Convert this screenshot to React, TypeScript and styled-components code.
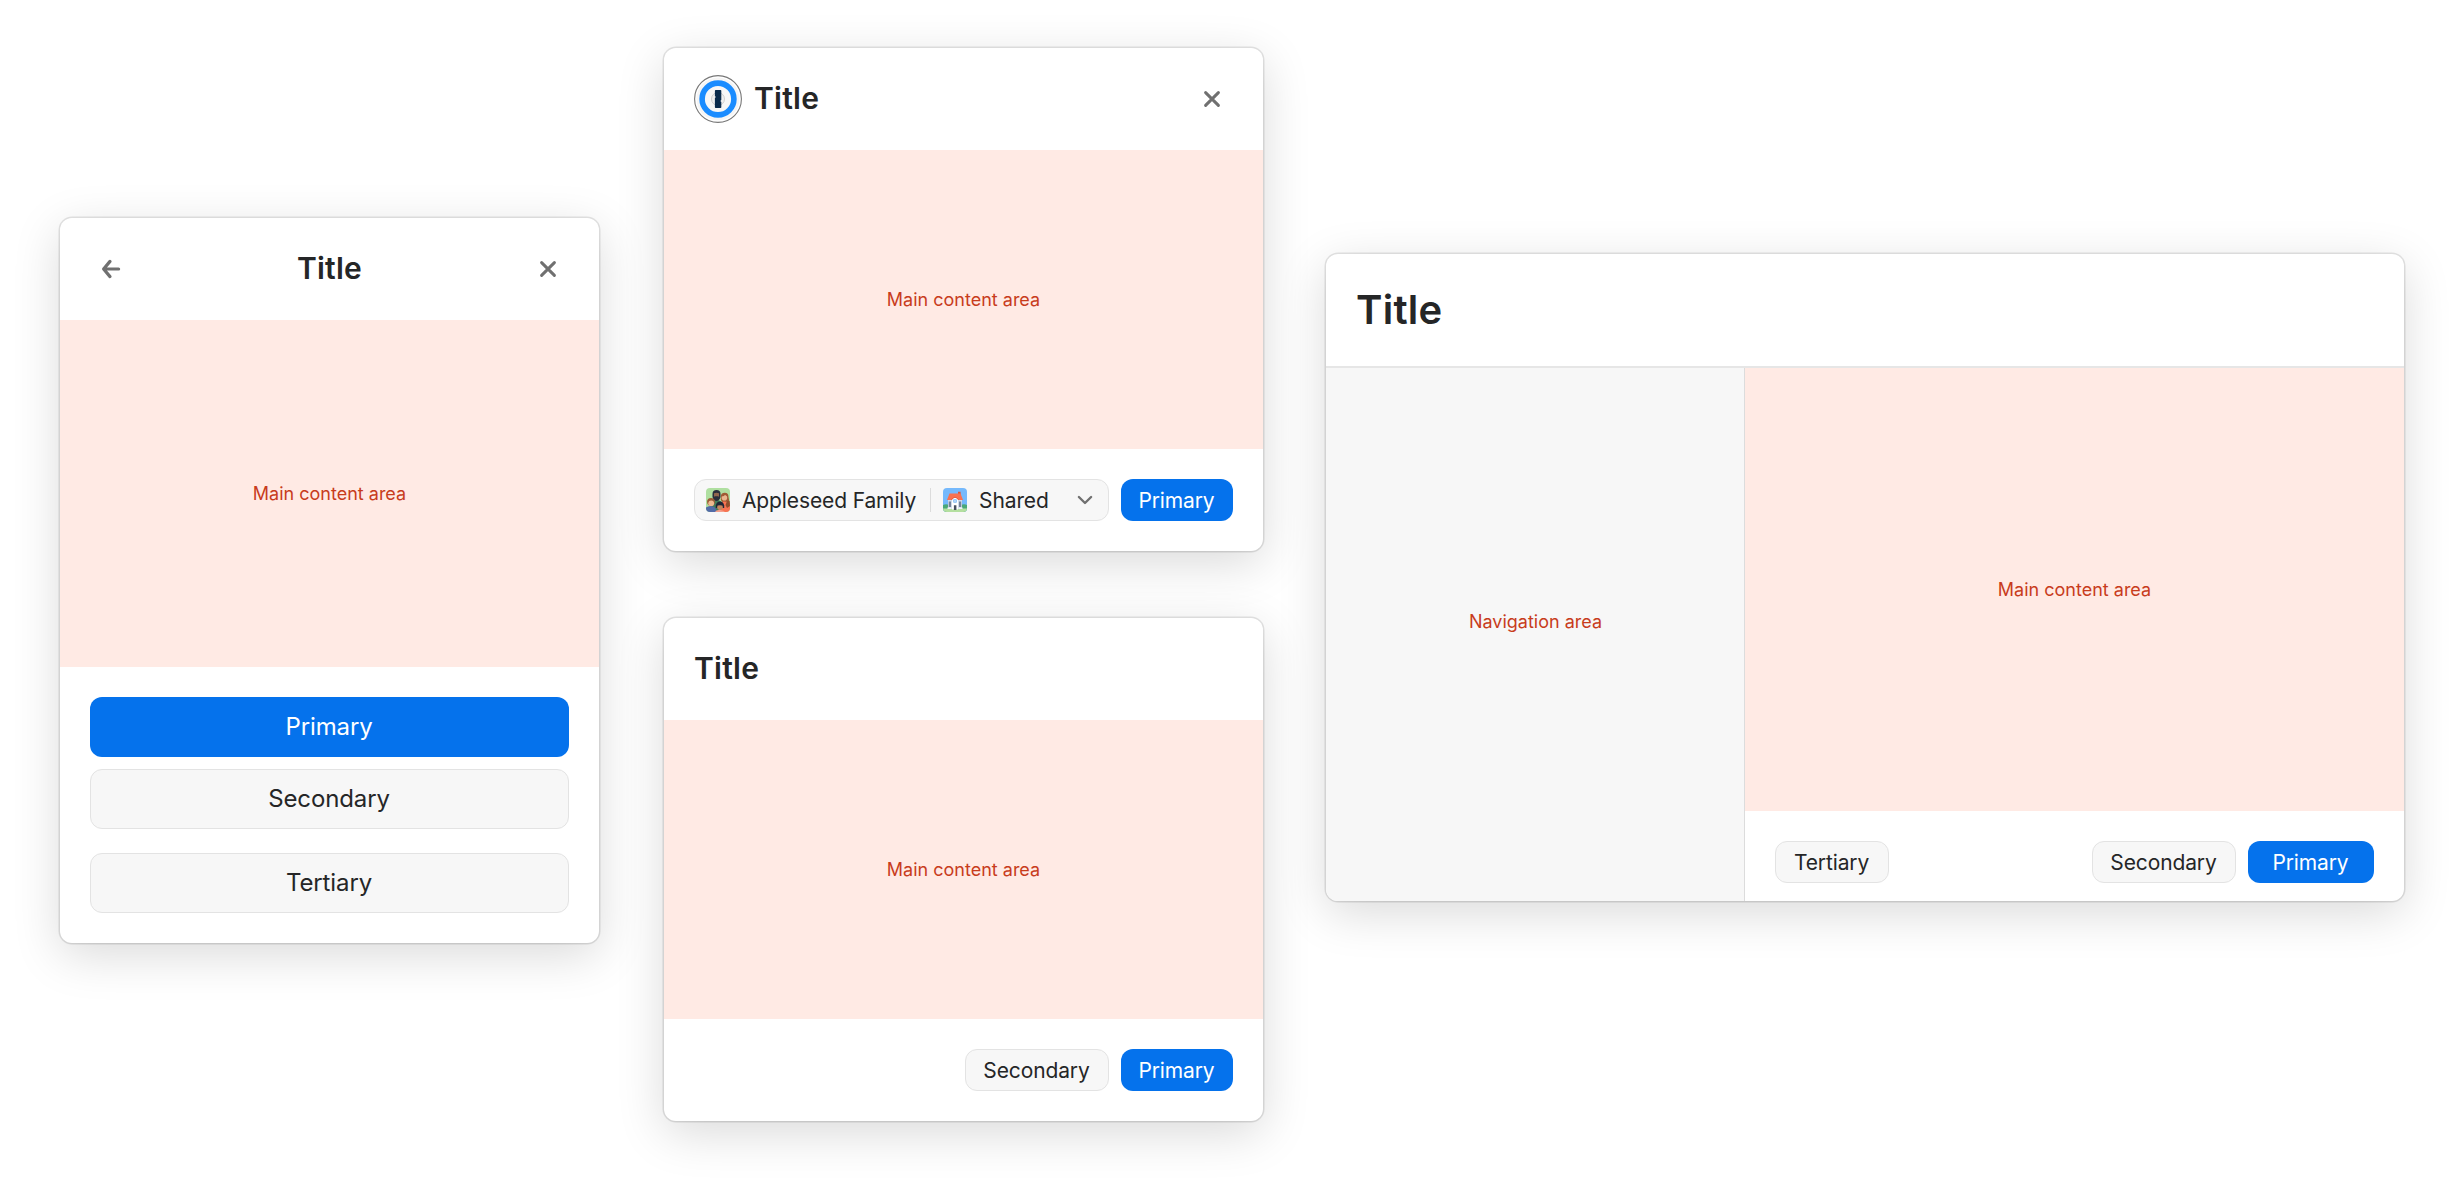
import { FC } from "react";
import styled, { createGlobalStyle } from "styled-components";

const GlobalStyle = createGlobalStyle`
  * {
    box-sizing: border-box;
  }
  body {
    margin: 0;
    background: #fff;
    color: #252627;
    font-family: Inter, "Liberation Sans", sans-serif;
  }
`;

const Page = styled.main`
  display: flex;
  align-items: flex-start;
  width: 2464px;
  height: 1193px;
  padding: 48px 60px 0;
  overflow: hidden;
`;

const Column = styled.div<{ $top?: number; $left?: number }>`
  display: flex;
  flex-direction: column;
  gap: 67px;
  margin-top: ${({ $top }) => $top || 0}px;
  margin-left: ${({ $left }) => $left || 0}px;
`;

const Card = styled.section<{ $width: number; $height: number }>`
  display: flex;
  flex-direction: column;
  width: ${({ $width }) => $width}px;
  height: ${({ $height }) => $height}px;
  border-radius: 12px;
  background: #fff;
  box-shadow:
    0 0 0 1.5px rgba(0, 0, 0, 0.1),
    0 1px 2px rgba(0, 0, 0, 0.04),
    0 12px 48px rgba(0, 0, 0, 0.15);
`;

const Header = styled.header<{ $center?: boolean }>`
  display: flex;
  align-items: center;
  justify-content: ${({ $center }) => ($center ? "space-between" : "flex-start")};
  flex: none;
  height: 102px;
  padding: 0 30px;
`;

const LargeHeader = styled(Header)`
  height: 114px;
  border-bottom: 2px solid #e6e6e6;
`;

const Title = styled.h2<{ $size?: number }>`
  margin: 0;
  padding-bottom: ${({ $size }) => ($size ? 0 : 2)}px;
  font-size: ${({ $size }) => $size || 30}px;
  font-weight: 600;
  letter-spacing: 0.25px;
  line-height: 1.2;
`;

const IconButton = styled.button`
  display: flex;
  align-items: center;
  justify-content: center;
  width: 42px;
  height: 42px;
  padding: 0;
  border: 0;
  background: none;
  color: #707070;
`;

const CloseButton = styled(IconButton)`
  margin-left: auto;
`;

const Logo = styled.svg`
  flex: none;
  width: 48px;
  height: 48px;
  margin-right: 12px;
`;

const Content = styled.div`
  display: flex;
  align-items: center;
  justify-content: center;
  flex: 1;
  background: #ffeae4;
  color: #c83c1c;
  font-size: 18px;
`;

const Navigation = styled(Content)`
  flex: none;
  width: 419px;
  padding: 0 0 26px 1px;
  border-right: 1px solid #dcdcdc;
  border-bottom-left-radius: 12px;
  background: #f7f7f7;
`;

const Split = styled.div`
  display: flex;
  flex: 1;
`;

const Pane = styled.div`
  display: flex;
  flex-direction: column;
  flex: 1;
`;

const Footer = styled.footer<{ $bottom?: number }>`
  display: flex;
  justify-content: flex-end;
  gap: 12px;
  padding: 30px 30px ${({ $bottom }) => $bottom || 30}px;
`;

const StackedFooter = styled.footer`
  display: flex;
  flex-direction: column;
  gap: 12px;
  padding: 30px;
`;

const Button = styled.button<{ $primary?: boolean; $width?: number }>`
  width: ${({ $width }) => ($width ? `${$width}px` : "auto")};
  height: 42px;
  padding: 0 1px 0 0;
  border: ${({ $primary }) => ($primary ? "0" : "1px solid #e3e3e3")};
  border-radius: 12px;
  background: ${({ $primary }) => ($primary ? "#0572ec" : "#f7f7f7")};
  color: ${({ $primary }) => ($primary ? "#fff" : "#252627")};
  font-family: inherit;
  font-size: 21px;
  letter-spacing: -0.12px;
`;

const LargeButton = styled(Button)`
  height: 60px;
  padding-bottom: 1px;
  font-size: 24px;
`;

const LastButton = styled(LargeButton)`
  margin-top: 12px;
`;

const LeadingButton = styled(Button)`
  margin-right: auto;
`;

const VaultSelect = styled.div`
  display: flex;
  align-items: center;
  flex: 1;
  height: 42px;
  padding: 0 15px 0 11px;
  border: 1px solid #e3e3e3;
  border-radius: 12px;
  background: #f7f7f7;
  font-size: 21px;
  letter-spacing: -0.12px;
`;

const VaultIcon = styled.svg`
  flex: none;
  width: 24px;
  height: 24px;
  margin-right: 12px;
`;

const Divider = styled.span`
  width: 1px;
  height: 24px;
  margin: 0 12px 0 14px;
  background: #dcdcdc;
`;

const Chevron = styled.svg`
  margin-left: auto;
`;

const CloseIcon: FC = () => (
  <svg width="18" height="18" viewBox="0 0 18 18" fill="none" stroke="currentColor" strokeWidth="3" strokeLinecap="round">
    <path d="M2.6 2.6 15.4 15.4M15.4 2.6 2.6 15.4" />
  </svg>
);

const BackIcon: FC = () => (
  <svg width="20" height="20" viewBox="0 0 20 20" fill="none" stroke="currentColor" strokeWidth="3.2" strokeLinecap="round" strokeLinejoin="round">
    <path d="M9 2.4 2.6 10 9 17.6M3 10h14.6" />
  </svg>
);

const LogoIcon: FC = () => (
  <Logo viewBox="0 0 48 48">
    <circle cx="24" cy="24" r="23.4" fill="#fff" stroke="#777" strokeWidth="1.1" />
    <circle cx="24" cy="24" r="21.5" fill="#f5f5f5" />
    <circle cx="24" cy="24" r="15.9" fill="#f7f7f7" stroke="#1a8cff" strokeWidth="5.6" />
    <circle cx="24" cy="24" r="6.5" fill="#f0f0f0" stroke="#c4c4c4" strokeWidth="0.8" />
    <path d="M21.7 15h4.8q.8 0 .8.8v9.1l-1 1 1 1v5.3q0 .8-.8.8h-4.8q-.8 0-.8-.8v-9.1l1-1-1-1v-5.3q0-.8.8-.8z" fill="#0a2b4c" />
  </Logo>
);

const FamilyIcon: FC = () => (
  <VaultIcon viewBox="0 0 24 24">
    <clipPath id="family">
      <rect width="24" height="24" rx="4" />
    </clipPath>
    <g clipPath="url(#family)">
      <rect width="24" height="24" fill="#afdfa0" />
      <path d="M4.5 24v-8q1-4 6-4t6 4v8z" fill="#437b59" />
      <path d="M14.8 12V9q0-4.2 4-4.2 3.7 0 3.7 4.2l1.5 8v2h-4z" fill="#a05a34" />
      <circle cx="18.4" cy="9.8" r="2.8" fill="#eab68e" />
      <path d="M15.5 8.5q3 0 4-2.5 1 2 2.5 2.5-.5-3.5-3.3-3.5-2.7 0-3.2 3.5z" fill="#a05a34" />
      <path d="M13 24v-7q2-3.5 5-3.5 6 0 6 4v6.5z" fill="#f87352" />
      <path d="M21 13h2.5l.5 5-3 2-1.5-3z" fill="#8f4e2c" />
      <path d="M6.5 6q0-4 4-4t4 4v3q-1 4-4 4t-4-4z" fill="#292e3c" />
      <path d="M8 5.2q2.500-.8 5 0v3.600l-1-.6h-3l-1 .6z" fill="#91664e" />
      <circle cx="5" cy="13.8" r="3.9" fill="#9a5a34" />
      <circle cx="5.2" cy="15.3" r="2.9" fill="#efb990" />
      <path d="M0 24v-4.5q4-3 9 0l2 4.5z" fill="#536ca7" />
      <path d="M9.8 20v-2.5q.8-4 4.2-4t4.2 4V20z" fill="#202637" />
      <circle cx="14" cy="19.3" r="2.8" fill="#c6865d" />
      <path d="M11.5 17.5q2.5-.5 5 0l-.6-1.8h-3.8z" fill="#202637" />
      <path d="M9 24q1-2.5 5-2t5 2z" fill="#f4a08d" />
    </g>
  </VaultIcon>
);

const HouseIcon: FC = () => (
  <VaultIcon viewBox="0 0 24 24">
    <clipPath id="house">
      <rect width="24" height="24" rx="4" />
    </clipPath>
    <g clipPath="url(#house)">
      <rect width="24" height="24" fill="#75b9fc" />
      <path d="M0 17q3-1.5 6 0h12q3-1.5 6 0v7H0z" fill="#4aa878" />
      <path d="M0 20.5h24V24H0z" fill="#b4dfa0" />
      <path d="M5 11.5h14V21H5z" fill="#cfd9e8" />
      <path d="M15 3.8h2.6V8H15z" fill="#d9553b" />
      <path d="M6.5 5.500h11l2.500 6.500H4z" fill="#f9714f" />
      <path d="M9 11.5q3-4 6 0v10H9z" fill="#fff" />
      <path d="M8.3 12q3.7-5.500 7.400 0" fill="none" stroke="#e45c40" />
      <circle cx="12" cy="13" r="2.1" fill="#5faaf1" />
      <path d="M12 10.9v4.2M9.9 13h4.200" stroke="#fff" strokeWidth=".6" />
      <path d="M10.9 17.2h2.5V22h-2.500z" fill="#46505f" />
      <path d="M5.8 13.5h2.2V19H5.8zM16 13.5h2.200V19H16z" fill="#75839a" />
      <path d="M4.500 19.500h4V21h-4zM15.500 19.500h4V21h-4z" fill="#eef2f7" />
    </g>
  </VaultIcon>
);

const App: FC = () => {
  return (
    <>
      <GlobalStyle />
      <Page>
        <Column $top={170}>
          <Card $width={539} $height={725}>
            <Header $center>
              <IconButton aria-label="Back">
                <BackIcon />
              </IconButton>
              <Title>Title</Title>
              <IconButton aria-label="Close">
                <CloseIcon />
              </IconButton>
            </Header>
            <Content>Main content area</Content>
            <StackedFooter>
              <LargeButton $primary>Primary</LargeButton>
              <LargeButton>Secondary</LargeButton>
              <LastButton>Tertiary</LastButton>
            </StackedFooter>
          </Card>
        </Column>

        <Column $left={65}>
          <Card $width={599} $height={503}>
            <Header>
              <LogoIcon />
              <Title>Title</Title>
              <CloseButton aria-label="Close">
                <CloseIcon />
              </CloseButton>
            </Header>
            <Content>Main content area</Content>
            <Footer>
              <VaultSelect>
                <FamilyIcon />
                Appleseed Family
                <Divider />
                <HouseIcon />
                Shared
                <Chevron width="16" height="10" viewBox="0 0 16 10" fill="none" stroke="#707070" strokeWidth="2.4" strokeLinecap="round" strokeLinejoin="round">
                  <path d="m1.9 2 6.1 6 6.1-6" />
                </Chevron>
              </VaultSelect>
              <Button $primary $width={112}>Primary</Button>
            </Footer>
          </Card>

          <Card $width={599} $height={503}>
            <Header>
              <Title>Title</Title>
            </Header>
            <Content>Main content area</Content>
            <Footer>
              <Button $width={144}>Secondary</Button>
              <Button $primary $width={112}>Primary</Button>
            </Footer>
          </Card>
        </Column>

        <Column $top={206} $left={63}>
          <Card $width={1078} $height={647}>
            <LargeHeader>
              <Title $size={40}>Title</Title>
            </LargeHeader>
            <Split>
              <Navigation>Navigation area</Navigation>
              <Pane>
                <Content>Main content area</Content>
                <Footer $bottom={18}>
                  <LeadingButton $width={114}>Tertiary</LeadingButton>
                  <Button $width={144}>Secondary</Button>
                  <Button $primary $width={126}>Primary</Button>
                </Footer>
              </Pane>
            </Split>
          </Card>
        </Column>
      </Page>
    </>
  );
};

export default App;
